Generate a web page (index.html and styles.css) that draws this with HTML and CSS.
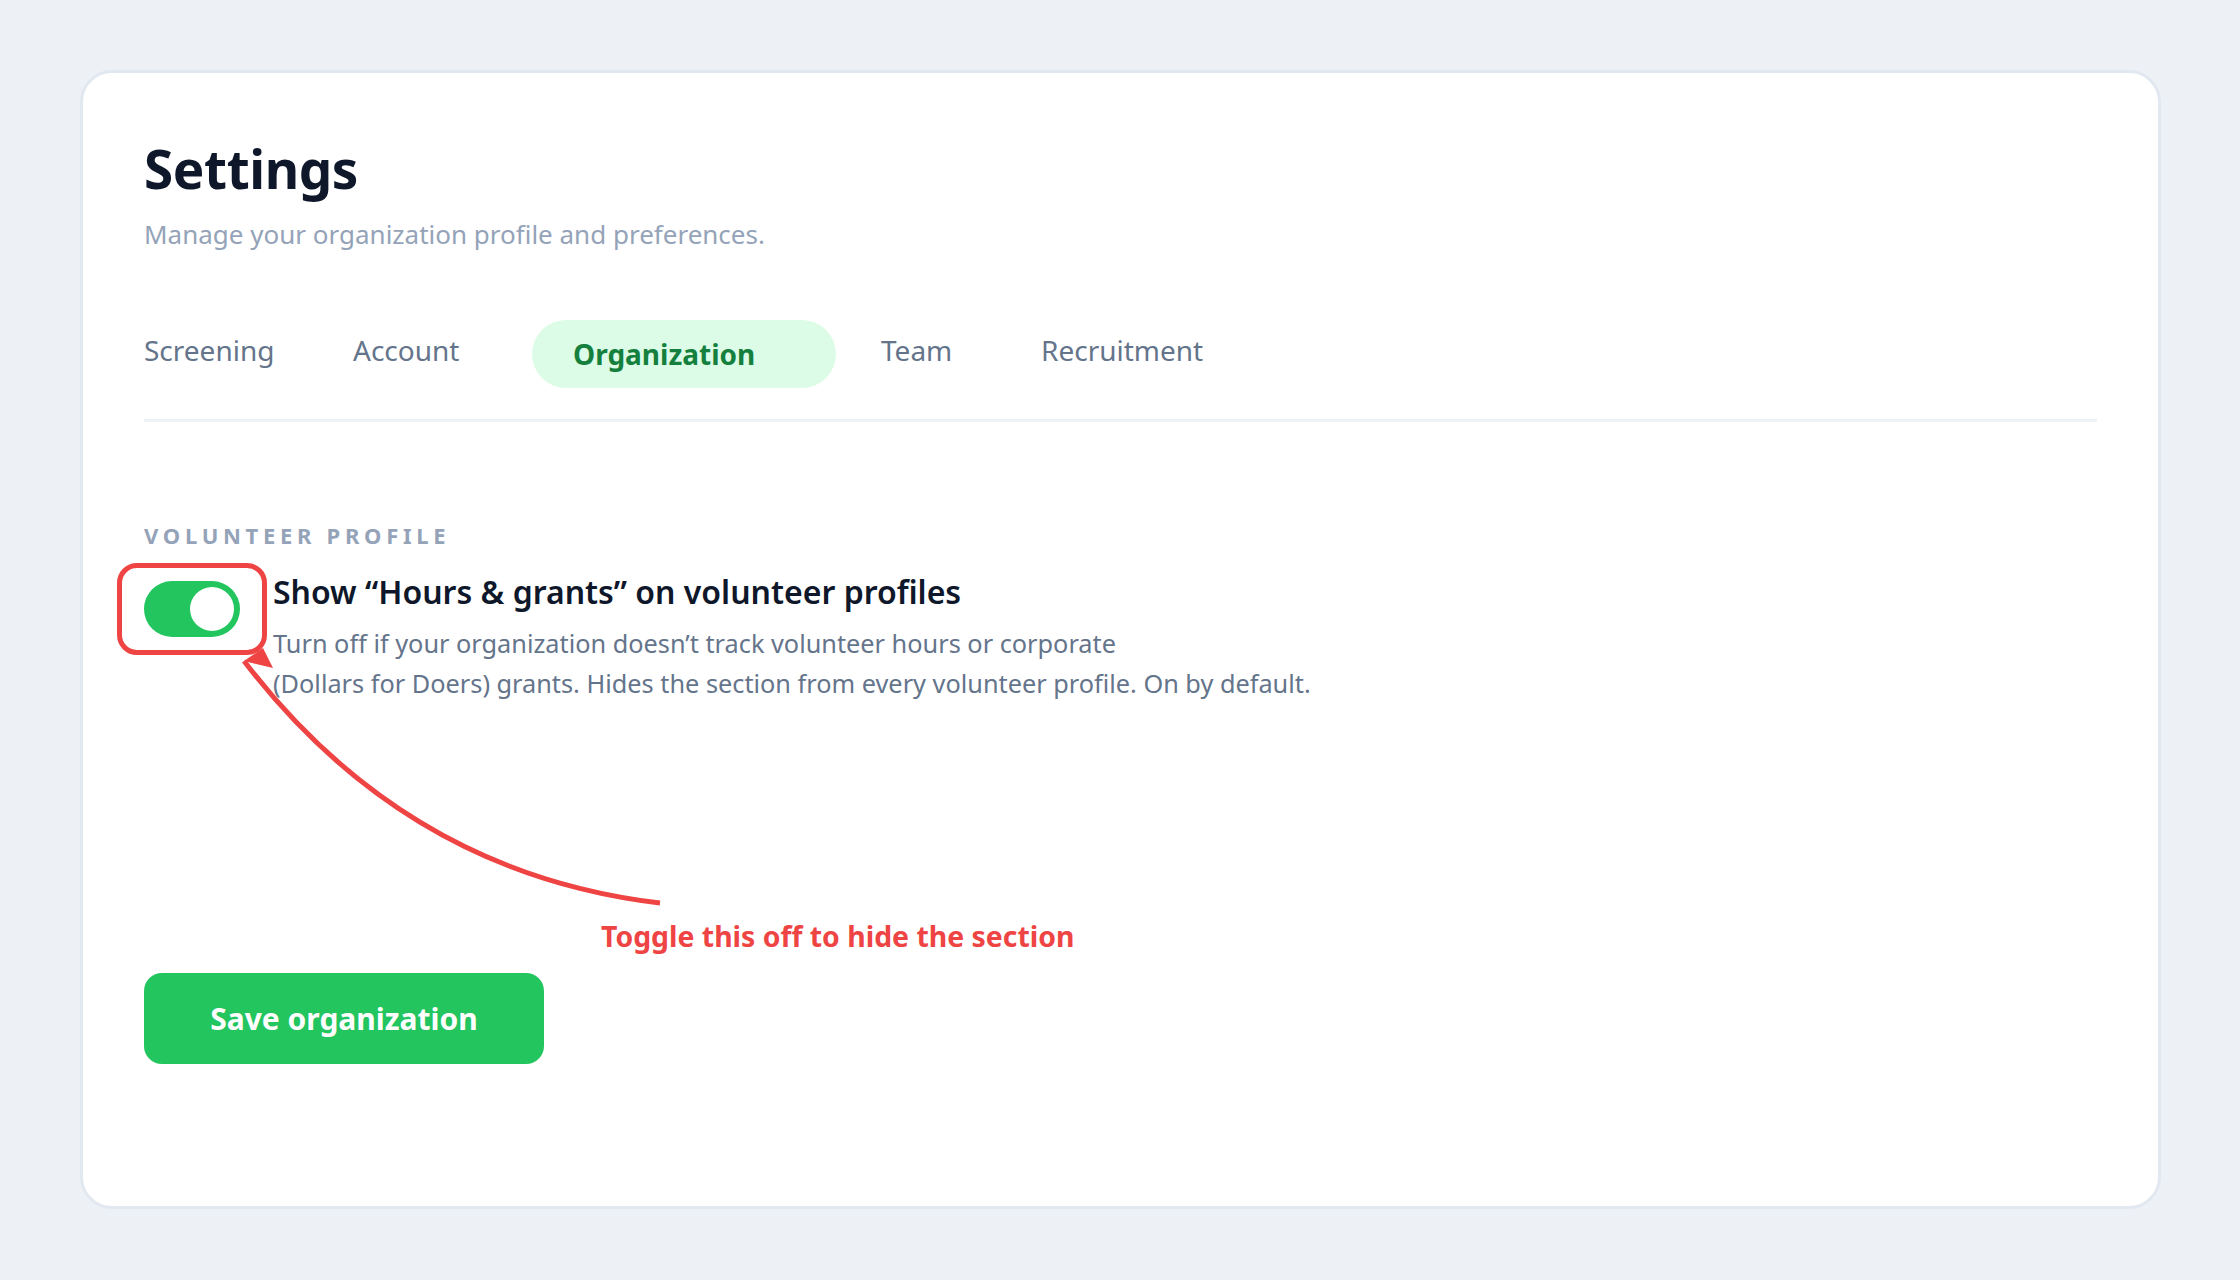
FILE: index.html
```html
<!DOCTYPE html>
<html lang="en">
<head>
<meta charset="utf-8">
<title>Settings</title>
<link rel="stylesheet" href="styles.css">
</head>
<body>
<main class="card">
  <header class="page-head">
    <h1 class="page-title">Settings</h1>
    <p class="page-sub">Manage your organization profile and preferences.</p>
  </header>

  <nav class="tabs">
    <a class="tab tab-screening">Screening</a>
    <a class="tab tab-account">Account</a>
    <a class="tab tab-active">Organization</a>
    <a class="tab tab-team">Team</a>
    <a class="tab">Recruitment</a>
  </nav>

  <section class="section">
    <h2 class="section-label">VOLUNTEER PROFILE</h2>
    <div class="setting">
      <div class="toggle-wrap">
        <span class="toggle is-on"><span class="toggle-knob"></span></span>
        <span class="highlight-ring"></span>
      </div>
      <div class="setting-text">
        <div class="setting-title">Show “Hours &amp; grants” on volunteer profiles</div>
        <p class="setting-desc">Turn off if your organization doesn’t track volunteer hours or corporate<br>(Dollars for Doers) grants. Hides the section from every volunteer profile. On by default.</p>
      </div>
    </div>
  </section>

  <button class="btn-save" type="button">Save organization</button>

  <svg class="callout-arrow" width="700" height="900" viewBox="0 0 700 900" aria-hidden="true">
    <path d="M161 588 Q323 800 577 830" fill="none" stroke="#ef4444" stroke-width="5"/>
    <polygon points="161,588 180,575 190,595" fill="#ef4444"/>
  </svg>
  <div class="callout-text">Toggle this off to hide the section</div>
</main>
</body>
</html>
```

FILE: styles.css
```css
* { box-sizing: border-box; }

html, body {
  margin: 0;
  padding: 0;
}

body {
  background: #edf1f6;
  font-family: "Noto Sans", "Open Sans", sans-serif;
  color: #0f172a;
}

.card {
  position: relative;
  margin: 70px 79px 0 80px;
  height: 1139px;
  background: #ffffff;
  border: 3px solid #e2e8f0;
  border-radius: 32px;
  padding: 64px 61px 0 61px;
}

.page-title {
  margin: 0;
  font-size: 53px;
  line-height: 64px;
  font-weight: 700;
  color: #0f172a;
  letter-spacing: -0.4px;
}

.page-sub {
  margin: 15px 0 0;
  font-size: 26px;
  line-height: 36px;
  color: #94a3b8;
}

.tabs {
  display: flex;
  align-items: flex-start;
  margin-top: 68px;
  padding-bottom: 31px;
  border-bottom: 3px solid #eef1f6;
}

.tab {
  font-size: 28px;
  line-height: 60px;
  color: #64748b;
  white-space: nowrap;
}

.tab-screening { width: 209px; }
.tab-account { width: 179px; }
.tab-team { width: 160px; }

.tab-active {
  width: 304px;
  height: 68px;
  line-height: 68px;
  padding-left: 41px;
  margin-right: 45px;
  border-radius: 34px;
  background: #dcfce7;
  color: #15803d;
  font-weight: 700;
}

.section {
  margin-top: 98px;
}

.section-label {
  margin: 0;
  font-size: 22px;
  line-height: 30px;
  font-weight: 700;
  letter-spacing: 4.7px;
  color: #94a3b8;
}

.setting {
  display: flex;
  align-items: flex-start;
  gap: 33px;
  margin-top: 22px;
}

.toggle-wrap {
  position: relative;
  margin-top: 9px;
  flex: none;
}

.toggle {
  display: block;
  position: relative;
  width: 96px;
  height: 56px;
  border-radius: 28px;
  background: #22c55e;
}

.toggle-knob {
  position: absolute;
  top: 6px;
  left: 46px;
  width: 44px;
  height: 44px;
  border-radius: 50%;
  background: #ffffff;
}

.highlight-ring {
  position: absolute;
  left: -27px;
  top: -18px;
  width: 150px;
  height: 92px;
  border: 5px solid #ef4444;
  border-radius: 20px;
}

.setting-title {
  font-size: 32px;
  line-height: 40px;
  font-weight: 600;
  color: #0f172a;
}

.setting-desc {
  margin: 11px 0 0;
  font-size: 25.3px;
  line-height: 40px;
  color: #64748b;
}

.btn-save {
  display: block;
  margin-top: 270px;
  width: 400px;
  height: 91px;
  border: 0;
  border-radius: 18px;
  background: #22c55e;
  color: #ffffff;
  font-family: inherit;
  font-size: 30px;
  font-weight: 700;
  cursor: pointer;
}

.callout-arrow {
  position: absolute;
  left: 0;
  top: 0;
  pointer-events: none;
}

.callout-text {
  position: absolute;
  left: 518px;
  top: 843px;
  font-size: 28.4px;
  line-height: 40px;
  font-weight: 700;
  color: #ef4444;
  white-space: nowrap;
}
```
